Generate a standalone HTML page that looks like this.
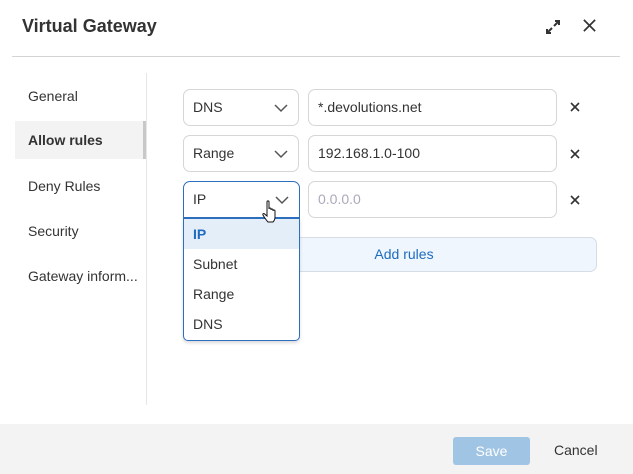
<!DOCTYPE html><html><head><style>
*{box-sizing:border-box;margin:0;padding:0}
body{width:633px;height:474px;background:#fff;font-family:"Liberation Sans",sans-serif;color:#333;position:relative;overflow:hidden;font-size:14px}
.a{position:absolute}
.sel,.inp{position:absolute;border:1px solid #d6d6d6;border-radius:7px;height:37px;padding-left:9px;line-height:35px;font-size:14px;color:#333;background:#fff}
.x{position:absolute;font-size:15px;color:#333}
.nav{position:absolute;left:28px;font-size:14px;color:#333}
.chev{position:absolute;right:10px;top:14px}
.opt{height:30px;line-height:30px;padding-left:9px}
</style></head><body>
<div class="a" style="left:22px;top:16px;font-size:18px;font-weight:bold;color:#333">Virtual Gateway</div>
<svg class="a" style="left:544px;top:18px" width="18" height="18" viewBox="0 0 18 18" fill="none" stroke="#333" stroke-width="2"><path d="M11 3h4v4M15 3l-5 5M7 15H3v-4M3 15l5-5"/></svg>
<svg class="a" style="left:582px;top:18px" width="15" height="15" viewBox="0 0 16 16" stroke="#333" stroke-width="1.8"><path d="M2 2l12 12M14 2L2 14"/></svg>
<div class="a" style="left:12px;top:56px;width:608px;height:1px;background:#d4d4d4"></div>
<div class="a" style="left:146px;top:73px;width:1px;height:332px;background:#e6e6e6"></div>
<div class="a" style="left:15px;top:121px;width:131px;height:38px;background:#f3f3f3;border-right:3px solid #c8c8c8"></div>
<div class="nav" style="top:88px">General</div>
<div class="nav" style="top:132px;font-weight:bold">Allow rules</div>
<div class="nav" style="top:178px">Deny Rules</div>
<div class="nav" style="top:223px">Security</div>
<div class="nav" style="top:268px">Gateway inform...</div>

<div class="sel" style="left:183px;top:89px;width:116px">DNS<svg class="chev" width="14" height="9" viewBox="0 0 14 9" fill="none" stroke="#555" stroke-width="1.5"><path d="M1 1l6 6 6-6"/></svg></div>
<div class="inp" style="left:308px;top:89px;width:249px">*.devolutions.net</div>
<svg class="a" style="left:570px;top:102px" width="10" height="10" viewBox="0 0 10 10" stroke="#333" stroke-width="1.6"><path d="M1 1l8 8M9 1L1 9"/></svg>
<div class="sel" style="left:183px;top:135px;width:116px">Range<svg class="chev" width="14" height="9" viewBox="0 0 14 9" fill="none" stroke="#555" stroke-width="1.5"><path d="M1 1l6 6 6-6"/></svg></div>
<div class="inp" style="left:308px;top:135px;width:249px">192.168.1.0-100</div>
<svg class="a" style="left:570px;top:149px" width="10" height="10" viewBox="0 0 10 10" stroke="#333" stroke-width="1.6"><path d="M1 1l8 8M9 1L1 9"/></svg>
<div class="sel" style="left:183px;top:181px;width:117px;border-color:#2d6fbf;border-radius:7px 7px 0 0">IP<svg class="chev" width="14" height="9" viewBox="0 0 14 9" fill="none" stroke="#555" stroke-width="1.5"><path d="M1 1l6 6 6-6"/></svg></div>
<div class="inp" style="left:308px;top:181px;width:249px;color:#aab">0.0.0.0</div>
<svg class="a" style="left:570px;top:195px" width="10" height="10" viewBox="0 0 10 10" stroke="#333" stroke-width="1.6"><path d="M1 1l8 8M9 1L1 9"/></svg>
<div class="a" style="left:183px;top:237px;width:414px;height:35px;background:#eff6fd;border:1px solid #d6dde5;border-radius:7px;padding-left:28px;text-align:center;line-height:33px;color:#1f6bbf">Add rules</div>
<div class="a" style="left:183px;top:218px;width:117px;height:123px;background:#fff;border:1px solid #2d6fbf;border-radius:0 0 5px 5px;box-shadow:0 2px 3px rgba(0,0,0,.15)">
<div class="opt" style="background:#e4eef9;color:#1f6bbf;font-weight:bold">IP</div>
<div class="opt">Subnet</div><div class="opt">Range</div><div class="opt">DNS</div></div>
<svg class="a" style="left:262px;top:200px" width="16" height="24" viewBox="0 0 16 24"><path d="M5 2c0-1.5 2-1.5 2 0v7c0-1.3 2-1.3 2 0v1c0-1.3 2-1.3 2 0v1c0-1.3 2-1.3 2 0v6c0 2-1 4-2 5H6c-1-1-4-5-5-7-.6-1.2.8-2 1.6-1L5 16z" fill="#fff" stroke="#111" stroke-width="1"/></svg>
<div class="a" style="left:0;top:424px;width:633px;height:50px;background:#f3f3f3"></div>
<div class="a" style="left:453px;top:437px;width:77px;height:28px;background:#a0c4e4;border-radius:3px;color:#fff;text-align:center;line-height:28px">Save</div>
<div class="a" style="left:554px;top:442px;color:#333">Cancel</div>
</body></html>
